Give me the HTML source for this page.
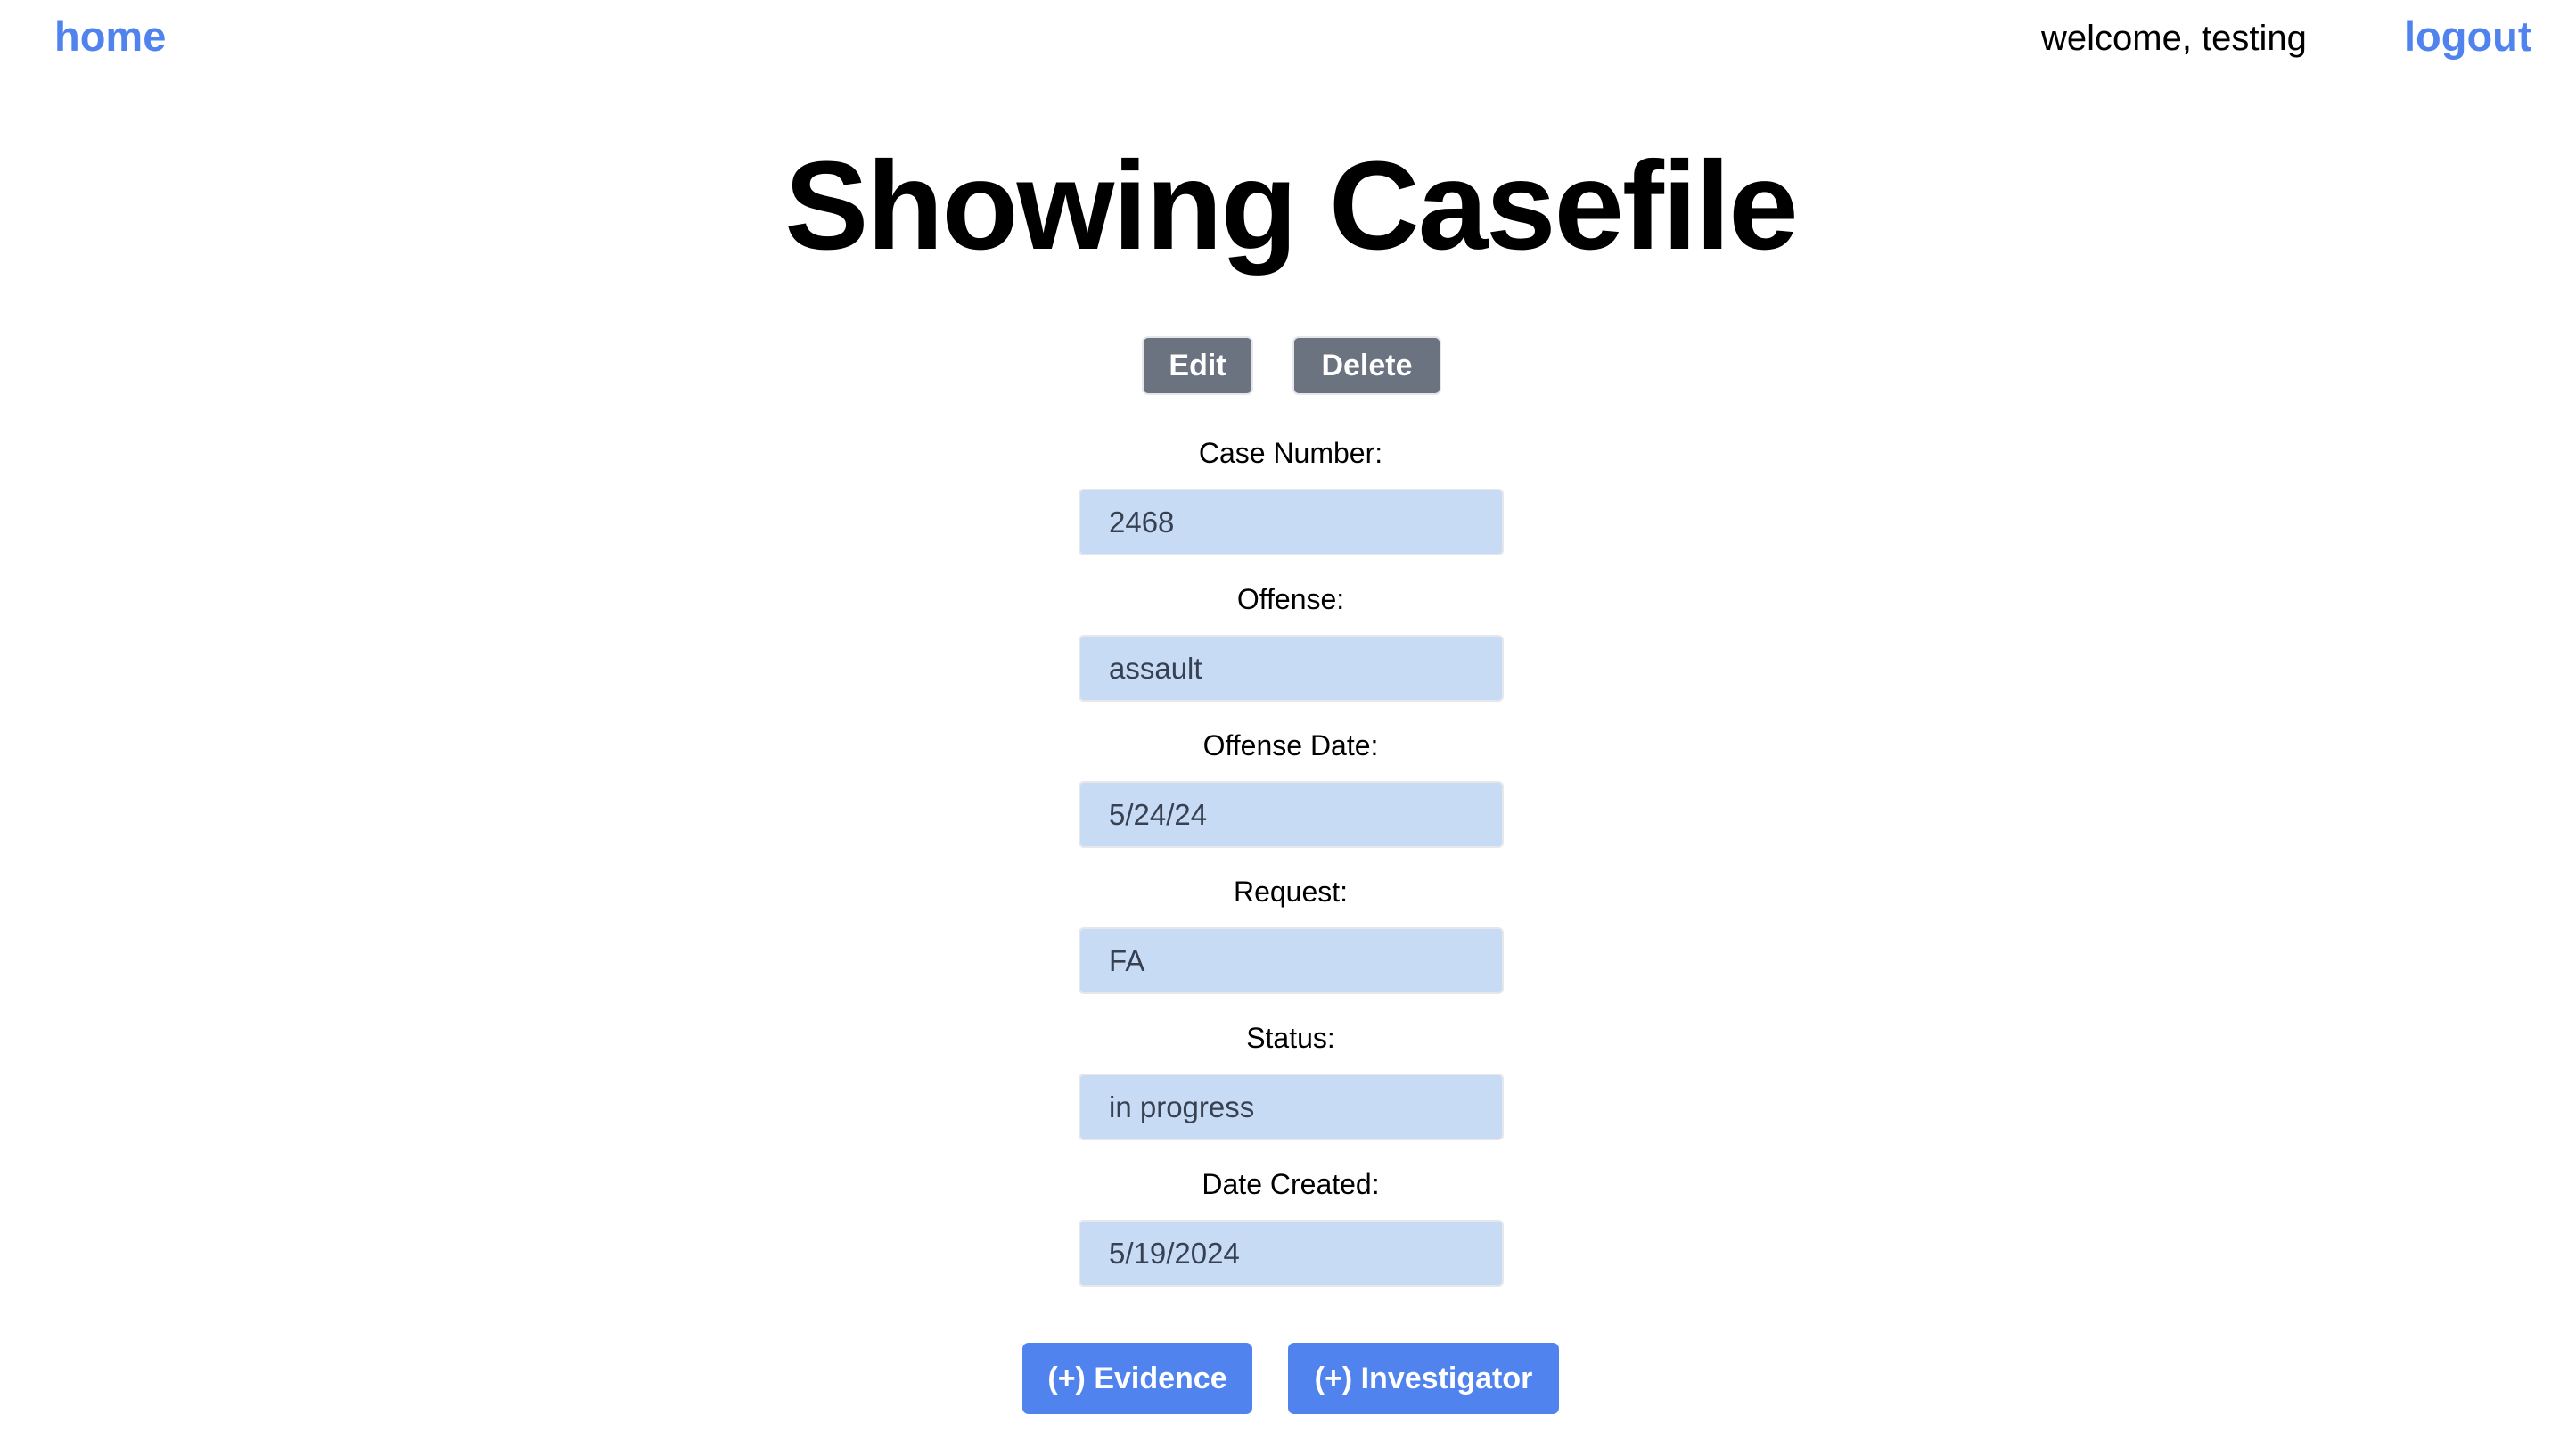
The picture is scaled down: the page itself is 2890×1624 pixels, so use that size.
<!DOCTYPE html>
<html><head><meta charset="utf-8"><style>
*{box-sizing:border-box;margin:0;padding:0}
body{width:2890px;height:1624px;background:#fff;font-family:"Liberation Sans",sans-serif;position:relative;overflow:hidden}
.a{position:absolute;white-space:nowrap}
.lnk{color:#5083ee;font-weight:bold;font-size:47px}
.btn{position:absolute;border-radius:7px;color:#fff;font-weight:bold;font-size:34px;display:flex;align-items:center;justify-content:center;white-space:nowrap}
.g{background:#6b7280;border:2px solid #e5e7eb}
.b{background:#5083ee}
.lab{position:absolute;left:0;width:2896px;text-align:center;font-size:32px;color:#000;line-height:40px}
.inp{position:absolute;left:1210px;width:477px;height:75px;background:#c8dbf5;border:2px solid #e5e7eb;border-radius:6px;font-size:33px;color:#374151;padding-left:32px;line-height:71px}
</style></head><body>
<div class="a lnk" style="left:61px;top:13px">home</div>
<div class="a" style="left:2290px;top:21px;font-size:40px;color:#000">welcome, testing</div>
<div class="a lnk" style="left:2697px;top:13px">logout</div>
<div class="a" style="left:0;width:2896px;text-align:center;top:148px;font-size:141px;font-weight:bold;line-height:165px;letter-spacing:-2px;color:#000">Showing Casefile</div>
<div class="btn g" style="left:1281px;top:377px;width:125px;height:66px">Edit</div>
<div class="btn g" style="left:1450px;top:377px;width:167px;height:66px">Delete</div>
<div class="lab" style="top:488px">Case Number:</div>
<div class="inp" style="top:548px">2468</div>
<div class="lab" style="top:652px">Offense:</div>
<div class="inp" style="top:712px">assault</div>
<div class="lab" style="top:816px">Offense Date:</div>
<div class="inp" style="top:876px">5/24/24</div>
<div class="lab" style="top:980px">Request:</div>
<div class="inp" style="top:1040px">FA</div>
<div class="lab" style="top:1144px">Status:</div>
<div class="inp" style="top:1204px">in progress</div>
<div class="lab" style="top:1308px">Date Created:</div>
<div class="inp" style="top:1368px">5/19/2024</div>
<div class="btn b" style="left:1147px;top:1506px;width:258px;height:80px">(+) Evidence</div>
<div class="btn b" style="left:1445px;top:1506px;width:304px;height:80px">(+) Investigator</div>
</body></html>
